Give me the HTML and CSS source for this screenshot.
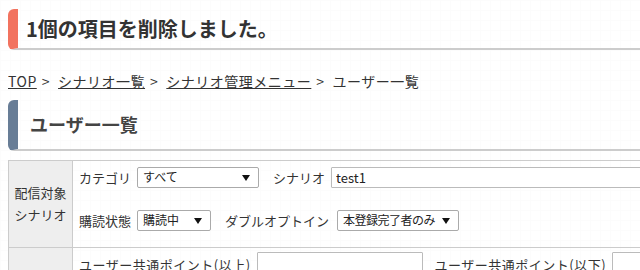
FILE: index.html
```html
<!DOCTYPE html>
<html lang="ja">
<head>
  <meta charset="UTF-8">
  <meta name="viewport" content="width=device-width, initial-scale=1.0">
  <title>ユーザー一覧</title>
  <link rel="stylesheet" href="styles.css">
</head>
<body>
  <div class="msg">1個の項目を削除しました。</div>

  <p class="crumbs">
    <a href="#">TOP</a><span class="sep">&gt;</span><a href="#">シナリオ一覧</a><span class="sep">&gt;</span><a href="#">シナリオ管理メニュー</a><span class="sep">&gt;</span>ユーザー一覧
  </p>

  <h2 class="title">ユーザー一覧</h2>

  <table class="search">
    <tr>
      <th>配信対象<br>シナリオ</th>
      <td>
        <div class="line">
          <label class="lbl">カテゴリ</label>
          <span class="sel sel-cat"><select><option>すべて</option></select></span>
          <label class="lbl">シナリオ</label>
          <input type="text" class="txt txt-long" value="test1">
        </div>
        <div class="line">
          <label class="lbl">購読状態</label>
          <span class="sel sel-status"><select><option>購読中</option></select></span>
          <label class="lbl">ダブルオプトイン</label>
          <span class="sel sel-opt"><select><option>本登録完了者のみ</option></select></span>
        </div>
      </td>
    </tr>
    <tr>
      <th></th>
      <td>
        <div class="line">
          <label class="lbl lbl-wide">ユーザー共通ポイント(以上)</label>
          <input type="text" class="txt txt-point">
          <label class="lbl lbl-wide">ユーザー共通ポイント(以下)</label>
          <input type="text" class="txt txt-point">
        </div>
        <div class="line"></div>
      </td>
    </tr>
  </table>
</body>
</html>
```

FILE: styles.css
```css
html {
  overflow: hidden;
}

body {
  margin: 9px 0 0 8px;
  font-family: "Noto Sans CJK JP", "Noto Sans", sans-serif;
  font-size: 13px;
  color: #333;
  background-color: #fff;
  background-image:
    linear-gradient(to right, #fcfcfc 1px, transparent 1px),
    linear-gradient(to bottom, #fcfcfc 1px, transparent 1px);
  background-size: 10px 10px;
}

/* message heading */
.msg {
  height: 39px;
  line-height: 39px;
  padding-left: 8px;
  border-left: 10px solid #f2735f;
  border-bottom: 2px solid #ccc;
  border-radius: 6px 0 0 6px;
  font-size: 20px;
  font-weight: bold;
  color: #333;
}

.crumbs {
  margin: 21px 0 0;
  line-height: 20px;
  font-size: 14px;
  letter-spacing: 0.5px;
  color: #333;
}
.crumbs a {
  color: #333;
  text-decoration: underline;
}
.crumbs .sep {
  margin: 0 8px 0 5px;
}

.title {
  margin: 9px 0 0;
  height: 49px;
  line-height: 49px;
  padding-left: 12px;
  border-left: 10px solid #687d96;
  border-bottom: 2px solid #ccc;
  border-radius: 6px 0 0 6px;
  font-size: 18px;
  font-weight: bold;
  color: #444;
}

/* search table */
.search {
  margin-top: 9px;
  width: 900px;
  border-collapse: collapse;
  border: 1px solid #ccc;
}
.search th {
  width: 63px;
  background: #eee;
  border: 1px solid #ccc;
  font-weight: normal;
  font-size: 13px;
  line-height: 22px;
  padding: 0;
}
.search td {
  border: 1px solid #ccc;
  padding: 5px 6px 16px;
}

.line {
  display: flex;
  align-items: center;
  height: 22px;
}
.line + .line {
  margin-top: 21px;
}

.lbl {
  margin-right: 6px;
  white-space: nowrap;
}
.lbl-wide {
  letter-spacing: 0.5px;
}

.sel {
  position: relative;
  display: inline-block;
  margin-right: 14px;
}
.sel select {
  appearance: none;
  -webkit-appearance: none;
  display: block;
  height: 21px;
  padding: 0 20px 2px 5px;
  border: 1px solid #aaa;
  border-radius: 2px;
  background: #fff;
  font-family: inherit;
  font-size: 12px;
  color: #222;
  line-height: 17px;
}
.sel::after {
  content: "";
  position: absolute;
  right: 9px;
  top: 8px;
  border-left: 4px solid transparent;
  border-right: 4px solid transparent;
  border-top: 6px solid #111;
  pointer-events: none;
}
.sel-cat select {
  width: 122px;
}
.sel-status select {
  width: 74px;
}
.sel-opt {
  margin-left: 2px;
}
.sel-opt select {
  width: 122px;
  padding-left: 5px;
  letter-spacing: -0.5px;
}

.txt {
  height: 21px;
  box-sizing: border-box;
  border: 1px solid #bbb;
  border-radius: 1px;
  padding: 0 4px;
  font-family: inherit;
  font-size: 13px;
  color: #222;
  background: #fff;
  margin-right: 12px;
}
.txt-long {
  width: 420px;
}
.txt-point {
  width: 166px;
  height: 24px;
}
```
